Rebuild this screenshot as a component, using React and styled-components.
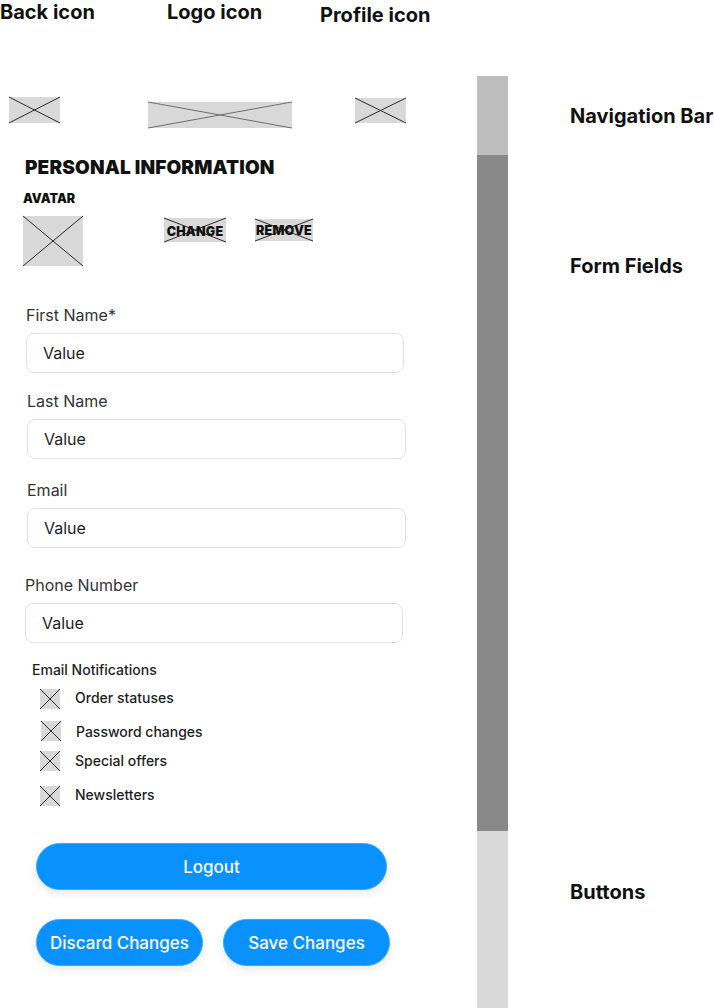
import React from 'react';
import styled, { createGlobalStyle } from 'styled-components';

const GlobalStyle = createGlobalStyle`
  html, body {
    margin: 0;
    padding: 0;
    background: #ffffff;
  }
  body {
    font-family: Inter, "Noto Sans", "Liberation Sans", sans-serif;
    color: #1e1e1e;
  }
  * {
    box-sizing: border-box;
  }
`;

const Page = styled.div`
  display: flex;
  width: 714px;
  height: 1008px;
  overflow: hidden;
  background: #fff;
`;

const Wireframe = styled.div`
  display: flex;
  flex-direction: column;
  align-items: flex-start;
  width: 477px;
  flex-shrink: 0;
`;

const NoteRow = styled.div`
  display: grid;
  grid-template-columns: 167px 153px auto;
  align-items: start;
  height: 27px;
  width: 100%;
`;

const Note = styled.div`
  font-size: 20px;
  line-height: 24px;
  font-weight: 700;
  color: #111;
  white-space: nowrap;
  margin-top: ${(p) => p.$mt || 0}px;
`;

const NavRow = styled.div`
  display: flex;
  align-items: flex-start;
  margin-top: 70px;
`;

const Box = styled.div`
  position: relative;
  flex-shrink: 0;
  width: ${(p) => p.$w}px;
  height: ${(p) => p.$h}px;
  margin-left: ${(p) => p.$ml || 0}px;
  margin-top: ${(p) => p.$mt || 0}px;
  background: #d9d9d9;
  display: flex;
  align-items: center;
  justify-content: center;
`;

const Cross = styled.svg`
  position: absolute;
  inset: 0;
  width: 100%;
  height: 100%;
  overflow: visible;
`;

const BoxLabel = styled.span`
  position: relative;
  font-size: 12.5px;
  line-height: 15px;
  font-weight: 900;
  letter-spacing: 0.2px;
  color: #111;
  margin-top: ${(p) => p.$mt || 0}px;
`;

const Heading = styled.h1`
  margin: 28px 0 0 25px;
  font-size: 19px;
  line-height: 23px;
  font-weight: 900;
  letter-spacing: 0.15px;
  color: #111;
`;

const SubHeading = styled.div`
  margin: 12px 0 0 23px;
  font-size: 12.5px;
  line-height: 15px;
  font-weight: 900;
  color: #111;
`;

const AvatarRow = styled.div`
  display: flex;
  align-items: flex-start;
  margin-top: 10px;
`;

const Field = styled.div`
  display: flex;
  flex-direction: column;
  margin-left: ${(p) => p.$ml}px;
  margin-top: ${(p) => p.$mt}px;
  width: ${(p) => p.$w}px;
`;

const Label = styled.label`
  font-size: 16px;
  line-height: 20px;
  color: #333;
  margin-bottom: 8px;
`;

const Input = styled.input`
  height: 40px;
  width: 100%;
  border: 1px solid #e2e2e2;
  border-radius: 8px;
  padding: 0 16px;
  font-family: inherit;
  font-size: 16px;
  color: #1e1e1e;
  background: #fff;
  outline: none;
`;

const GroupTitle = styled.div`
  margin: 18px 0 0 32px;
  font-size: 14px;
  line-height: 17px;
  font-weight: 500;
  color: #1e1e1e;
`;

const CheckRow = styled.div`
  display: flex;
  align-items: flex-start;
  gap: 15px;
  margin-left: ${(p) => p.$ml}px;
  margin-top: ${(p) => p.$mt}px;
`;

const CheckText = styled.span`
  font-size: 14px;
  line-height: 17px;
  font-weight: 500;
  color: #1e1e1e;
  margin-top: ${(p) => p.$offset || 0}px;
`;

const PillButton = styled.button`
  height: 47px;
  width: ${(p) => p.$w}px;
  border: 1px solid #3aa8ff;
  border-radius: 24px;
  background: #0991fd;
  color: #fff;
  font-family: inherit;
  font-size: 17px;
  font-weight: 500;
  box-shadow: 0 3px 10px rgba(0, 0, 0, 0.1);
  cursor: pointer;
  padding: 0;
`;

const LogoutButton = styled(PillButton)`
  margin: 37px 0 0 36px;
`;

const ButtonRow = styled.div`
  display: flex;
  gap: 20px;
  margin: 29px 0 0 36px;
`;

const SideBar = styled.div`
  display: flex;
  flex-direction: column;
  width: 31px;
  flex-shrink: 0;
  margin-top: 76px;
`;

const Segment = styled.div`
  height: ${(p) => (p.$h ? `${p.$h}px` : 'auto')};
  flex: ${(p) => (p.$h ? '0 0 auto' : '1')};
  background: ${(p) => p.$color};
`;

const Legend = styled.div`
  display: flex;
  flex-direction: column;
  padding-left: 62px;
`;

const Placeholder = ({ w, h, ml, mt, stroke = '#2a2a2a', children, labelMt }) => (
  <Box $w={w} $h={h} $ml={ml} $mt={mt}>
    <Cross viewBox={`0 0 ${w} ${h}`} preserveAspectRatio="none">
      <line x1="0" y1="0" x2={w} y2={h} stroke={stroke} strokeWidth="1" />
      <line x1={w} y1="0" x2="0" y2={h} stroke={stroke} strokeWidth="1" />
    </Cross>
    {children && <BoxLabel $mt={labelMt}>{children}</BoxLabel>}
  </Box>
);

const fields = [
  { label: 'First Name*', ml: 26, mt: 39, w: 378 },
  { label: 'Last Name', ml: 27, mt: 17.5, w: 379 },
  { label: 'Email', ml: 27, mt: 21.5, w: 379 },
  { label: 'Phone Number', ml: 25, mt: 26.5, w: 378 },
];

const notifications = [
  { text: 'Order statuses', ml: 40, mt: 11.5, offset: 0 },
  { text: 'Password changes', ml: 41, mt: 12, offset: 2 },
  { text: 'Special offers', ml: 40, mt: 9.5, offset: 1 },
  { text: 'Newsletters', ml: 40, mt: 15.5, offset: 0 },
];

const App = () => {
  return (
    <>
      <GlobalStyle />
      <Page>
        <Wireframe>
          <NoteRow>
            <Note $mt={0}>Back icon</Note>
            <Note $mt={0}>Logo icon</Note>
            <Note $mt={3}>Profile icon</Note>
          </NoteRow>

          <NavRow>
            <Placeholder w={51} h={26} ml={9} />
            <Placeholder w={144} h={26} ml={88} mt={5} stroke="#6e6e6e" />
            <Placeholder w={51} h={25} ml={63} mt={1} />
          </NavRow>

          <Heading>PERSONAL INFORMATION</Heading>
          <SubHeading>AVATAR</SubHeading>

          <AvatarRow>
            <Placeholder w={60} h={50} ml={23} />
            <Placeholder w={62} h={24} ml={81} mt={2} labelMt={2}>
              CHANGE
            </Placeholder>
            <Placeholder w={58} h={22} ml={29} mt={3}>
              REMOVE
            </Placeholder>
          </AvatarRow>

          {fields.map((f) => (
            <Field key={f.label} $ml={f.ml} $mt={f.mt} $w={f.w}>
              <Label>{f.label}</Label>
              <Input defaultValue="Value" readOnly />
            </Field>
          ))}

          <GroupTitle>Email Notifications</GroupTitle>
          {notifications.map((n) => (
            <CheckRow key={n.text} $ml={n.ml} $mt={n.mt}>
              <Placeholder w={20} h={20} />
              <CheckText $offset={n.offset}>{n.text}</CheckText>
            </CheckRow>
          ))}

          <LogoutButton $w={351}>Logout</LogoutButton>
          <ButtonRow>
            <PillButton $w={167}>Discard Changes</PillButton>
            <PillButton $w={167}>Save Changes</PillButton>
          </ButtonRow>
        </Wireframe>

        <SideBar>
          <Segment $h={79} $color="#bdbdbd" />
          <Segment $h={676} $color="#898989" />
          <Segment $color="#d9d9d9" />
        </SideBar>

        <Legend>
          <Note $mt={104}>Navigation Bar</Note>
          <Note $mt={126}>Form Fields</Note>
          <Note $mt={602}>Buttons</Note>
        </Legend>
      </Page>
    </>
  );
};

export default App;
